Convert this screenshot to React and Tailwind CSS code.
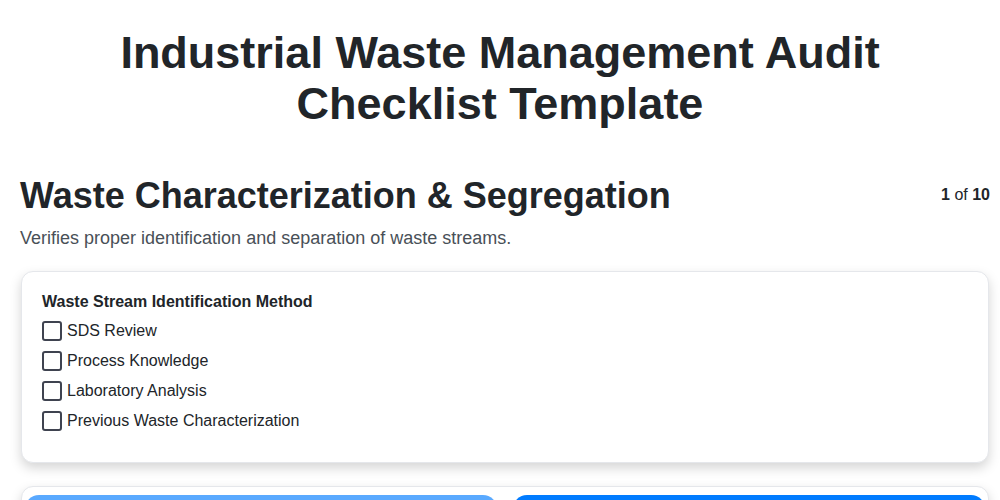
import React, { useState } from 'react';

const options = [
  'SDS Review',
  'Process Knowledge',
  'Laboratory Analysis',
  'Previous Waste Characterization',
];

export default function App() {
  const [checked, setChecked] = useState({});

  return (
    <div className="min-h-screen bg-white text-[#212529] font-['Liberation_Sans',Arial,sans-serif]">
      <h1 className="px-5 pt-[27px] text-center text-[45px] leading-[51px] font-bold">
        Industrial Waste Management Audit
        <br />
        Checklist Template
      </h1>

      <div className="pl-5 pr-[10px]">
        {/* Section header */}
        <div className="mt-[45px] flex items-start justify-between">
          <h2 className="text-[36px] leading-[43px] font-bold">Waste Characterization &amp; Segregation</h2>
          <div className="pt-[11px] text-base leading-5">
            <span className="font-bold">1</span> of <span className="font-bold">10</span>
          </div>
        </div>
        <p className="mt-[10px] text-lg leading-[22px] text-[#495057]">
          Verifies proper identification and separation of waste streams.
        </p>

        {/* Question card */}
        <div className="mt-[22px] mx-px rounded-xl border border-[#e5e7eb] bg-white px-5 pt-[21px] pb-[31px] shadow-[0_5px_12px_rgba(0,0,0,0.17)]">
          <div className="text-base font-bold leading-[18px]">Waste Stream Identification Method</div>
          <div className="mt-[10px] flex flex-col gap-[10px]">
            {options.map((o) => (
              <label key={o} className="flex items-center gap-[5px] h-5 text-base cursor-pointer">
                <input
                  type="checkbox"
                  checked={!!checked[o]}
                  onChange={() => setChecked({ ...checked, [o]: !checked[o] })}
                  className="appearance-none w-5 h-5 rounded-[3px] border-2 border-[#3f4350] bg-white checked:bg-[#007bff] checked:border-[#007bff]"
                />
                <span>{o}</span>
              </label>
            ))}
          </div>
        </div>

        {/* Navigation */}
        <div className="mt-[23px] mx-px rounded-xl border border-[#e5e7eb] bg-white p-[3px] shadow-[0_5px_12px_rgba(0,0,0,0.17)]">
          <div className="mt-[5px] grid grid-cols-2 gap-4">
            <button disabled className="h-11 rounded-[14px] bg-[#007bff] opacity-65 text-white font-bold">
              Previous
            </button>
            <button className="h-11 rounded-[14px] bg-[#007bff] text-white font-bold">Next</button>
          </div>
        </div>
      </div>
    </div>
  );
}
